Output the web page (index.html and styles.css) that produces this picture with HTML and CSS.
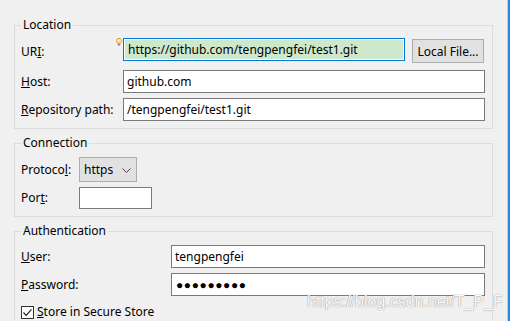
FILE: index.html
```html
<!DOCTYPE html>
<html lang="en">
<head>
  <meta charset="UTF-8">
  <title>Git Repository</title>
  <link rel="stylesheet" href="styles.css">
</head>
<body>
  <div class="page">
    <fieldset class="group">
      <legend>Location</legend>
      <div class="row row-uri">
        <label class="label">UR<u>I</u>:</label>
        <div class="uri-wrap">
          <svg class="bulb" width="6" height="8" viewBox="0 0 6 8">
            <path d="M3 0.5 C1.4 0.5 0.5 1.5 0.5 2.8 C0.5 3.9 1.3 4.4 1.6 5.2 L4.4 5.2 C4.7 4.4 5.5 3.9 5.5 2.8 C5.5 1.5 4.6 0.5 3 0.5 Z" fill="#ffe9a8" stroke="#e39a2c" stroke-width="1"/>
            <rect x="1.8" y="5.6" width="2.4" height="2" fill="#9a8c70"/>
          </svg>
          <input class="field field-uri" type="text" value="https://github.com/tengpengfei/test1.git">
        </div>
        <button class="btn">Local File...</button>
      </div>
      <div class="row row-host">
        <label class="label"><u>H</u>ost:</label>
        <input class="field" type="text" value="github.com">
      </div>
      <div class="row row-path">
        <label class="label"><u>R</u>epository path:</label>
        <input class="field" type="text" value="/tengpengfei/test1.git">
      </div>
    </fieldset>

    <fieldset class="group">
      <legend>Connection</legend>
      <div class="row row-conn">
        <label class="label label-conn">Protoco<u>l</u>:</label>
        <div class="select">
          <span>https</span>
          <svg width="9" height="5" viewBox="0 0 9 5"><path d="M0.5 0.5 L4.5 4.5 L8.5 0.5" fill="none" stroke="#444" stroke-width="1"/></svg>
        </div>
      </div>
      <div class="row row-port">
        <label class="label label-conn">Por<u>t</u>:</label>
        <input class="field field-port" type="text" value="">
      </div>
    </fieldset>

    <fieldset class="group group-last">
      <legend>Authentication</legend>
      <div class="row row-auth">
        <label class="label label-auth"><u>U</u>ser:</label>
        <input class="field" type="text" value="tengpengfei">
      </div>
      <div class="row row-pass">
        <label class="label label-auth"><u>P</u>assword:</label>
        <input class="field field-pass" type="text" value="●●●●●●●●●">
      </div>
      <div class="check-row">
        <span class="checkbox">
          <svg width="11" height="11" viewBox="0 0 11 11"><path d="M1.5 5.5 L4.2 8.3 L9.5 2.3" fill="none" stroke="#222" stroke-width="1.2"/></svg>
        </span>
        <span><u>S</u>tore in Secure Store</span>
      </div>
    </fieldset>

    <div class="watermark">https://blog.csdn.net/T_P_F</div>
  </div>
</body>
</html>
```

FILE: styles.css
```css
html, body {
  margin: 0;
  padding: 0;
}

body {
  background: #f0f0f0;
  font-family: 'Noto Sans', sans-serif;
  font-size: 12px;
  color: #000;
  height: 100vh;
  overflow: hidden;
  box-sizing: border-box;
  border-right: 2px solid #2b88d8;
}

.page {
  position: relative;
  height: 100%;
  box-sizing: border-box;
  padding: 17px 0 0 14px;
  border-right: 1px solid #cccccc;
  overflow: hidden;
}

.group {
  width: 479px;
  box-sizing: border-box;
  margin: 0 0 6px 0;
  padding: 0 7px 7px 6px;
  border: 1px solid #dcdcdc;
  min-inline-size: 0;
}

.group legend {
  padding: 0 2px;
  line-height: 16px;
}

.group-last {
  border-bottom: none;
  padding-bottom: 2px;
  margin-bottom: 0;
}

.row {
  display: flex;
  align-items: center;
}

.label {
  width: 102px;
  flex: none;
  line-height: 16px;
}

.label-conn { width: 58px; }
.label-auth { width: 150px; }

.row-uri {
  margin-top: 5px;
  height: 25px;
  align-items: flex-start;
}

.row-uri .label {
  margin-top: 6px;
}

.row-host { margin-top: 7px; }
.row-path { margin-top: 5px; }

.uri-wrap {
  position: relative;
  width: 282px;
  flex: none;
}

.bulb {
  position: absolute;
  left: -7px;
  top: 0;
}

.field {
  flex: 1;
  height: 23px;
  box-sizing: border-box;
  border: 1px solid #7a7a7a;
  background: #fff;
  padding: 0 3px;
  margin: 0;
  font-family: 'Noto Sans', sans-serif;
  font-size: 12px;
  color: #000;
  outline: none;
}

.field-uri {
  width: 100%;
  border-color: #0078d7;
  background: #cde8cd;
  box-shadow: inset 0 0 0 1px #fff;
  padding-left: 4px;
}

.btn {
  width: 72px;
  height: 24px;
  margin: 1px 1px 0 7px;
  padding: 0;
  box-sizing: border-box;
  border: 1px solid #adadad;
  background: #e1e1e1;
  font-family: 'Noto Sans', sans-serif;
  font-size: 12px;
  color: #000;
}

.row-conn { margin-top: 6px; }
.row-port { margin-top: 5px; }

.select {
  width: 58px;
  height: 25px;
  box-sizing: border-box;
  border: 1px solid #adadad;
  background: #e1e1e1;
  display: flex;
  align-items: center;
  justify-content: space-between;
  padding: 0 5px 0 4px;
}

.select svg { margin-top: 1px; }

.field-port {
  flex: none;
  width: 73px;
  height: 22px;
}

.row-auth { margin-top: 6px; }
.row-pass { margin-top: 5px; }

.field-pass {
  font-size: 12px;
  letter-spacing: 0.6px;
  padding-left: 4px;
}

.check-row {
  display: flex;
  align-items: center;
  gap: 3px;
  margin-top: 8px;
  line-height: 16px;
}

.checkbox {
  width: 13px;
  height: 13px;
  box-sizing: border-box;
  border: 1px solid #333;
  background: #fff;
  display: flex;
  align-items: center;
  justify-content: center;
}

.watermark {
  position: absolute;
  left: 307px;
  top: 293px;
  font-family: 'Liberation Sans', Arial, sans-serif;
  font-size: 16px;
  color: #fafafa;
  text-shadow: 0 0 1px #9a9a9a, 0 0 1px #9a9a9a;
}
```
